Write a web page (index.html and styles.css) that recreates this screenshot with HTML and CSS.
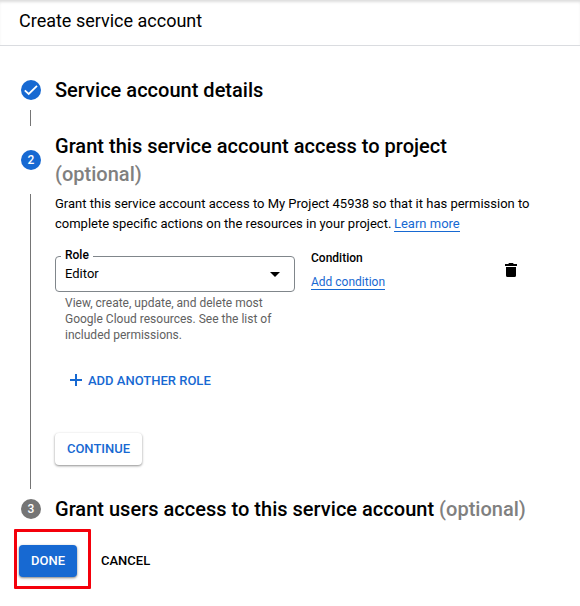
FILE: index.html
```html
<!DOCTYPE html>
<html lang="en">
<head>
<meta charset="utf-8">
<title>Create service account</title>
<link rel="stylesheet" href="styles.css">
</head>
<body>
<header class="header"><h1>Create service account</h1></header>
<main class="stepper">
  <section class="step-head">
    <span class="badge"><svg width="20" height="20" viewBox="0 0 20 20"><path d="M3.800 10.400 7.700 14 16 5.800" fill="none" stroke="#fff" stroke-width="1.800"/></svg></span>
    <h2>Service account details</h2>
  </section>
  <div class="connector short"></div>
  <section class="step-head">
    <span class="badge">2</span>
    <h2>Grant this service account access to project<br><span class="optional">(optional)</span></h2>
  </section>
  <section class="step-body">
    <p class="intro">Grant this service account access to My Project 45938 so that it has permission to<br>complete specific actions on the resources in your project. <a class="link learn">Learn more</a></p>
    <div class="role-row">
      <div class="role">
        <div class="select"><label class="select-label">Role</label><span>Editor</span>
          <svg width="10" height="5" viewBox="0 0 10 5"><path d="M0 0h10L5 5z"/></svg></div>
        <p class="hint">View, create, update, and delete most<br>Google Cloud resources. See the list of<br>included permissions.</p>
      </div>
      <div class="condition"><strong>Condition</strong><a class="link">Add condition</a></div>
      <svg class="trash" width="12" height="14" viewBox="0 0 12 14"><path d="M4 0h4l.7 1H12v2H0V1h3.300zM1 4h10v8.500q0 1.500-1.500 1.500h-7Q1 14 1 12.500z"/></svg>
    </div>
    <button class="add"><svg width="12" height="12" viewBox="0 0 12 12"><path d="M5 0h2v5h5v2H7v5H5V7H0V5h5z" fill="currentColor"/></svg><span>ADD ANOTHER ROLE</span></button>
    <button class="btn continue">CONTINUE</button>
  </section>
  <section class="step-head">
    <span class="badge grey">3</span>
    <h2>Grant users access to this service account <span class="optional">(optional)</span></h2>
  </section>
  <footer class="actions">
    <div class="highlight"><button class="btn done">DONE</button></div>
    <button class="cancel">CANCEL</button>
  </footer>
</main>
</body>
</html>
```
FILE: styles.css
```css
* { box-sizing: border-box; }
body { margin: 0; background: #fff; color: #000; font: 13px/20px Roboto, "Liberation Sans", sans-serif; }
h1, h2, p { margin: 0; }
button { font: 500 13px/20px Roboto, sans-serif; border: 0; padding: 0; background: none; white-space: nowrap; color: #000; }
.header { height: 46px; padding: 7px 19px 0; border-bottom: 1px solid #dadce0; box-shadow: inset 0 3px 3px -1px #ddd; }
h1 { font-size: 18px; font-weight: 400; line-height: 28px; }
.stepper { padding-top: 30px; }
.step-head { display: flex; align-items: center; padding-left: 21px; gap: 14px; }
h2 { font-size: 20px; font-weight: 500; line-height: 28px; white-space: nowrap; letter-spacing: .015px; }
.optional { color: #808080; }
.badge { width: 20px; height: 20px; border-radius: 50%; background: #1769d2; color: #fff; font-size: 12px; font-weight: 500; text-align: center; flex: none; }
.badge svg { display: block; }
.grey { background: #757575; }
.short { width: 1px; height: 16px; margin: 6px 0 6px 30px; background: #757575; }
.step-body { height: 295px; margin: 6px 0 6px 30px; padding-left: 24px; border-left: 1px solid #757575; display: flex; flex-direction: column; align-items: flex-start; }
.intro { white-space: nowrap; }
.link { color: #1769d2; border-bottom: 1px solid #1769d2; }
.learn { margin-left: -.6px; }
.role-row { display: flex; margin-top: 22px; }
.role { width: 240px; }
.select { position: relative; height: 36px; border: 1px solid #80868b; border-radius: 4px; display: flex; align-items: center; justify-content: space-between; padding: 0 14px 0 9px; }
.select-label { position: absolute; left: 5px; top: -9px; padding: 0 4px; background: #fff; font-size: 12px; font-weight: 500; line-height: 14px; }
.hint { margin-top: 3px; padding-left: 10px; color: #616161; font-size: 12px; line-height: 16px; white-space: nowrap; }
.condition { width: 194px; margin-left: 16px; margin-top: -8px; display: flex; flex-direction: column; align-items: flex-start; font-size: 12px; }
.condition strong { font-weight: 500; }
.condition .link { line-height: 14px; margin-top: 7px; }
.trash { margin-top: 7px; }
.add { margin: 28px 0 0 15px; display: flex; align-items: center; gap: 6px; color: #1769d2; }
.add svg { margin-top: -2px; }
.btn { height: 32px; border-radius: 4px; }
.continue { width: 87px; margin-top: 42px; color: #1769d2; background: #fff; box-shadow: 0 1px 3px rgba(0,0,0,.24), 0 1px 2px rgba(0,0,0,.24); }
.actions { display: flex; align-items: center; margin: 6px 0 0 14px; }
.highlight { width: 77px; height: 60px; padding: 13px 2px; border: 3px solid #f4000b; border-radius: 1px; }
.done { width: 58px; color: #fff; background: #1769d2; box-shadow: 0 1px 3px rgba(0,0,0,.3), 0 1px 2px rgba(0,0,0,.24); }
.cancel { margin: 4px 0 0 10px; }
```
